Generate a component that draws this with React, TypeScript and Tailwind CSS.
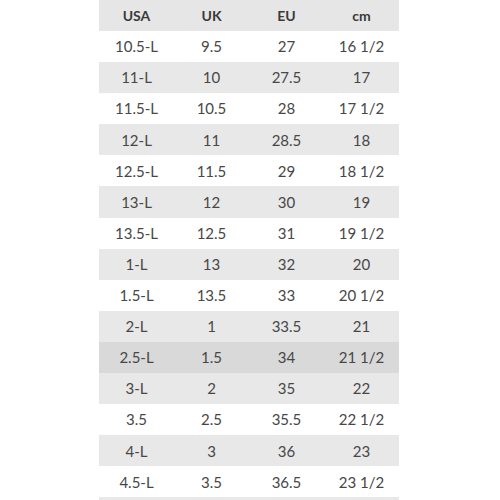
import React from 'react';

const rows: [string, string, string, string][] = [
  ['10.5-L', '9.5', '27', '16 1/2'],
  ['11-L', '10', '27.5', '17'],
  ['11.5-L', '10.5', '28', '17 1/2'],
  ['12-L', '11', '28.5', '18'],
  ['12.5-L', '11.5', '29', '18 1/2'],
  ['13-L', '12', '30', '19'],
  ['13.5-L', '12.5', '31', '19 1/2'],
  ['1-L', '13', '32', '20'],
  ['1.5-L', '13.5', '33', '20 1/2'],
  ['2-L', '1', '33.5', '21'],
  ['2.5-L', '1.5', '34', '21 1/2'],
  ['3-L', '2', '35', '22'],
  ['3.5', '2.5', '35.5', '22 1/2'],
  ['4-L', '3', '36', '23'],
  ['4.5-L', '3.5', '36.5', '23 1/2'],
];

export default function App() {
  return (
    <div className="w-[500px] h-[500px] overflow-hidden bg-white flex justify-center font-['Lato',sans-serif] text-[#474747]">
      <div className="w-[300px] ml-[-2px]">
        {/* Header */}
        <div className="grid grid-cols-4 h-[31px] items-center bg-[#e6e6e6] text-[14px] font-bold text-[#3a3a3a]">
          <div className="text-center">USA</div>
          <div className="text-center">UK</div>
          <div className="text-center">EU</div>
          <div className="text-center">cm</div>
        </div>

        {/* Rows */}
        {rows.map((r, i) => (
          <div
            key={r[0]}
            className={
              'grid grid-cols-4 h-[31.1px] items-center text-[15px] ' +
              (r[0] === '2.5-L' ? 'bg-[#d9d9d9]' : i % 2 === 1 ? 'bg-[#e8e8e8]' : 'bg-white')
            }
          >
            {r.map((c, j) => (
              <div key={j} className="text-center">
                {c}
              </div>
            ))}
          </div>
        ))}

        {/* next row, cut off by the crop */}
        <div className="h-[31px] bg-[#e8e8e8]" />
      </div>
    </div>
  );
}
